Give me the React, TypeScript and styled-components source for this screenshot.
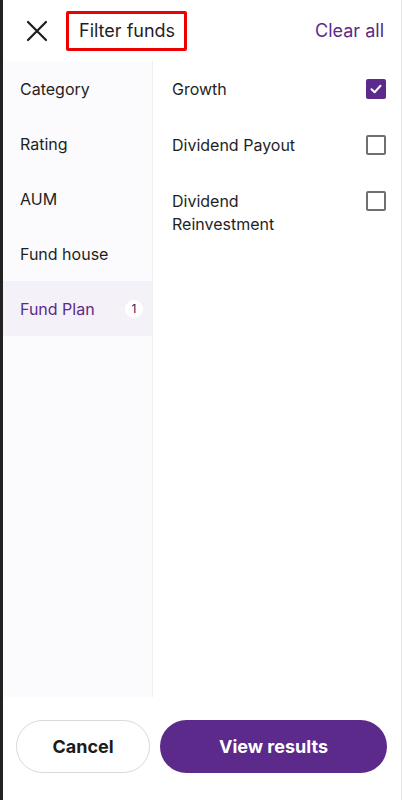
import React, { FC } from 'react';
import styled, { createGlobalStyle } from 'styled-components';

const GlobalStyle = createGlobalStyle`
  * { box-sizing: border-box; }
  body {
    margin: 0;
    font-family: Inter, "Noto Sans", sans-serif;
    background: #fff;
  }
`;

const categories = ['Category', 'Rating', 'AUM', 'Fund house', 'Fund Plan'];
const plans = [
  { label: 'Growth', checked: true },
  { label: 'Dividend Payout', checked: false },
  { label: 'Dividend Reinvestment', checked: false },
];

const CloseIcon = () => (
  <svg width="24" height="24" viewBox="0 0 24 24">
    <path d="M3 3L21 21M21 3L3 21" stroke="#1c1c1c" strokeWidth="2.2" strokeLinecap="round" />
  </svg>
);

const CheckMark = () => (
  <svg width="14" height="14" viewBox="0 0 14 14">
    <path d="M2.5 7.2L5.6 10.2L11.5 3.8" stroke="#fff" strokeWidth="2" fill="none" strokeLinecap="round" strokeLinejoin="round" />
  </svg>
);

const App: FC = () => {
  return (
    <Root>
      <GlobalStyle />
      <Header>
        <HeaderLeft>
          <IconButton>
            <CloseIcon />
          </IconButton>
          <TitleBox>Filter funds</TitleBox>
        </HeaderLeft>
        <ClearAll>Clear all</ClearAll>
      </Header>
      <Body>
        <Sidebar>
          {categories.map((c) => (
            <SideItem key={c} $active={c === 'Fund Plan'}>
              {c}
              {c === 'Fund Plan' && <Badge>1</Badge>}
            </SideItem>
          ))}
        </Sidebar>
        <Options>
          {plans.map((p) => (
            <OptionRow key={p.label}>
              <OptionLabel>{p.label}</OptionLabel>
              <Checkbox $checked={p.checked}>{p.checked && <CheckMark />}</Checkbox>
            </OptionRow>
          ))}
        </Options>
      </Body>
      <Footer>
        <CancelButton>Cancel</CancelButton>
        <PrimaryButton>View results</PrimaryButton>
      </Footer>
    </Root>
  );
};

export default App;

const Root = styled.div`
  width: 402px;
  height: 800px;
  display: flex;
  flex-direction: column;
  border-left: 3px solid #222;
  border-right: 1px solid #e6e6e6;
  background: #fff;
`;
const Header = styled.div`
  height: 61px;
  display: flex;
  align-items: center;
  justify-content: space-between;
  padding: 0 17px 0 22px;
`;
const HeaderLeft = styled.div`
  display: flex;
  align-items: center;
  gap: 17px;
`;
const IconButton = styled.div`
  display: flex;
  width: 24px;
  height: 24px;
`;
const TitleBox = styled.div`
  width: 121px;
  height: 40px;
  border: 3px solid #ec0000;
  border-radius: 2px;
  display: flex;
  align-items: center;
  padding-left: 10px;
  font-size: 18px;
  color: #1f1f1f;
`;
const ClearAll = styled.div`
  font-size: 18px;
  color: #5b2a8b;
`;
const Body = styled.div`
  flex: 1;
  display: flex;
`;
const Sidebar = styled.div`
  width: 150px;
  background: #fbfafc;
  border-right: 1px solid #efefef;
`;
const SideItem = styled.div<{ $active?: boolean }>`
  height: 55px;
  display: flex;
  align-items: center;
  justify-content: space-between;
  padding: 0 9px 0 17px;
  font-size: 16px;
  color: ${(p) => (p.$active ? '#5b2a8b' : '#1f1f1f')};
  background: ${(p) => (p.$active ? '#f4f1f8' : 'transparent')};
`;
const Badge = styled.span`
  width: 18px;
  height: 18px;
  border-radius: 50%;
  background: #fff;
  display: flex;
  align-items: center;
  justify-content: center;
  font-size: 12px;
  color: #3d2060;
`;
const Options = styled.div`
  flex: 1;
`;
const OptionRow = styled.div`
  display: flex;
  align-items: flex-start;
  justify-content: space-between;
  padding: 17px 15px 16px 19px;
`;
const OptionLabel = styled.div`
  font-size: 16px;
  line-height: 23px;
  color: #1f1f1f;
  max-width: 150px;
`;
const Checkbox = styled.div<{ $checked?: boolean }>`
  width: 20px;
  height: 20px;
  margin-top: 1px;
  border-radius: 2px;
  display: flex;
  align-items: center;
  justify-content: center;
  background: ${(p) => (p.$checked ? '#5b2a8b' : '#fff')};
  border: 2px solid ${(p) => (p.$checked ? '#5b2a8b' : '#707070')};
`;
const Footer = styled.div`
  display: flex;
  gap: 10px;
  padding: 23px 14px 27px 13px;
`;
const CancelButton = styled.button`
  width: 134px;
  height: 53px;
  border-radius: 27px;
  border: 1px solid #d9d9d9;
  background: #fff;
  font-family: Inter, "Noto Sans", sans-serif;
  font-size: 18px;
  font-weight: 700;
  color: #1c1c1c;
`;
const PrimaryButton = styled.button`
  flex: 1;
  height: 53px;
  border-radius: 27px;
  border: none;
  background: #5b2a8b;
  font-family: Inter, "Noto Sans", sans-serif;
  font-size: 18px;
  font-weight: 700;
  color: #fff;
`;
